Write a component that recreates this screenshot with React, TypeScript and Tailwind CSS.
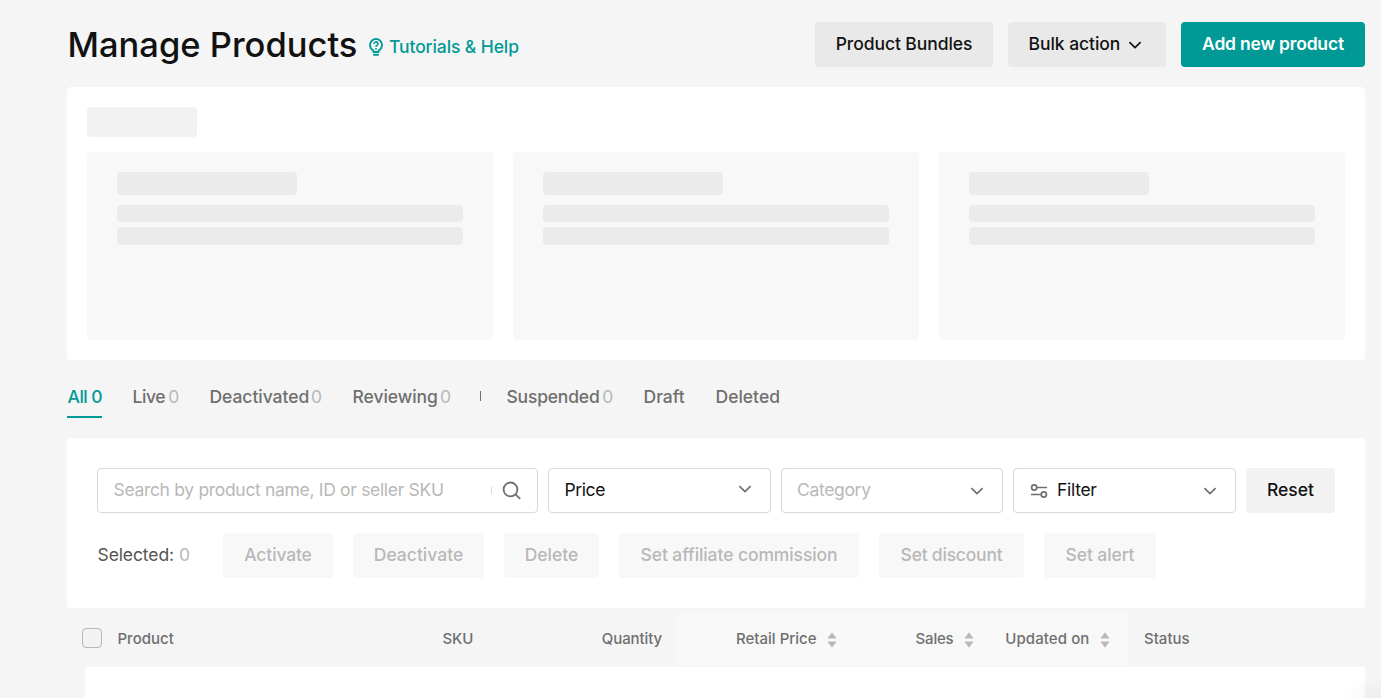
import { clsx } from "clsx";

const Chevron = ({ className }: { className?: string }) => (
  <svg className={clsx("h-[8px] w-[14px] shrink-0", className)} viewBox="0 0 14 8" fill="none" stroke="currentColor" strokeWidth="1.7">
    <path d="M1.4 1.2 7 6.6l5.6-5.4" strokeLinejoin="round" />
  </svg>
);

const Sorter = () => (
  <svg className="h-[16px] w-[10px] shrink-0" viewBox="0 0 10 16" fill="#b8b8b8">
    <path d="M5 0.5 9.7 6.5H0.3zM5 15.5 0.3 9.5h9.4z" />
  </svg>
);

const HelpBulb = () => (
  <svg className="mb-[1px] h-[18px] w-[14px] shrink-0" viewBox="0 0 14 18" fill="none" stroke="currentColor" strokeWidth="1.8">
    <path d="M4.4 14V12.6C2.4 11.5 1 9.6 1 7a6 6 0 0 1 12 0c0 2.6-1.4 4.5-3.4 5.600V14z" strokeLinejoin="round" />
    <path d="M4.200 16.800h5.600" strokeWidth="2" />
    <path d="M5 5.900a2 1.850 0 1 1 2.900 1.500C7.300 7.750 7 8.100 7 8.900" strokeWidth="1.600" />
    <path d="M7 9.900v1.500" strokeWidth="1.700" />
  </svg>
);

const SearchIcon = () => (
  <svg className="h-[20px] w-[20px] shrink-0" viewBox="0 0 20 20" fill="none" stroke="#6f6f6f" strokeWidth="1.8">
    <circle cx="8.500" cy="8.400" r="6.900" />
    <path d="m13.300 13.200 4.900 4.700" />
  </svg>
);

const FilterIcon = () => (
  <svg className="ml-[1px] h-[14px] w-[18px] shrink-0" viewBox="0 0 18 14" fill="none" stroke="#6f6f6f" strokeWidth="1.700">
    <circle cx="4.200" cy="3.500" r="2.600" />
    <path d="M6.800 3.500H17M1 10.500h10.200" />
    <circle cx="13.800" cy="10.500" r="2.600" />
  </svg>
);

const Skeleton = () => (
  <div className="h-[188px] flex-1 rounded bg-[#f8f8f8] px-[30px] pt-5">
    <div className="h-[23px] w-[180px] rounded bg-[#ebebeb]" />
    <div className="mt-[10px] h-[17px] rounded bg-[#ebebeb]" />
    <div className="mt-[5px] h-[18px] rounded bg-[#ebebeb]" />
  </div>
);

const tabs = [
  { label: "All", count: "0", box: "w-[35px] text-[#009995] tracking-[-0.5px]", active: true },
  { label: "Live", count: "0", box: "w-[47px] ml-[30px] tracking-[-0.4px]" },
  { label: "Deactivated", count: "0", box: "w-[113px] ml-[30px] tracking-[-0.05px]" },
  { label: "Reviewing", count: "0", box: "w-[99px] ml-[30px] tracking-[-0.05px]" },
  { label: "Suspended", count: "0", box: "w-[107px] ml-[25px] tracking-[-0.2px]" },
  { label: "Draft", box: "w-[42px] ml-[30px]" },
  { label: "Deleted", box: "w-[66px] ml-[30px]" },
];

const actions = [
  { label: "Activate", box: "w-[110px] tracking-[-0.15px]" },
  { label: "Deactivate", box: "w-[131px]" },
  { label: "Delete", box: "w-[95px]" },
  { label: "Set affiliate commission", box: "w-[240px] tracking-[-0.09px]" },
  { label: "Set discount", box: "w-[145px] tracking-[-0.22px]" },
  { label: "Set alert", box: "w-[112px] tracking-[-0.1px]" },
];

const field = "flex h-[45px] items-center rounded border border-[#d9d9d9] bg-white pl-[15px]";

export default function App() {
  return (
    <div className="relative h-[698px] overflow-hidden bg-[#f5f5f5] pl-[67px] pr-4 font-['Inter',sans-serif] text-[17.5px] font-medium whitespace-nowrap text-[#121212]">
      <header className="flex h-[87px] items-start pt-[22px]">
        <h1 className="h-[45px] w-[302px] pl-[0.5px] text-[34.5px] leading-[45px]">Manage Products</h1>
        <a className="flex h-[50px] items-center gap-[6px] text-[#009995]">
          <HelpBulb />
          <span className="tracking-[-0.1px]">Tutorials &amp; Help</span>
        </a>
        <div className="ml-auto flex gap-[15px]">
          <button className="h-[45px] w-[178px] rounded bg-[#e9e9e9] pb-px tracking-[-0.08px]">Product Bundles</button>
          <button className="flex h-[45px] w-[158px] items-center gap-[8px] rounded bg-[#e9e9e9] pb-px pl-[20.500px] tracking-[-0.05px]">
            Bulk action
            <Chevron className="mt-[2px]" />
          </button>
          <button className="h-[45px] w-[184px] rounded bg-[#009995] pb-px font-semibold tracking-[-0.2px] text-white">Add new product</button>
        </div>
      </header>

      <section className="h-[273px] rounded bg-white p-5">
        <div className="h-[30px] w-[110px] rounded bg-[#f2f2f2]" />
        <div className="mt-[15px] flex gap-5">
          <Skeleton />
          <Skeleton />
          <Skeleton />
        </div>
      </section>

      <nav className="flex h-[78px] pt-[16px] text-[#6f6f6f]">
        {tabs.map((t) => (
          <div key={t.label} className="flex">
            {t.label === "Suspended" && <span className="mt-[15px] ml-[29px] h-[10px] w-px bg-[#6f6f6f]" />}
            <div className={clsx("flex h-[42px] justify-between border-b-2 leading-[41px]", t.box, t.active ? "border-[#009995]" : "border-transparent")}>
              <span className="pl-[0.5px]">{t.label}</span>
              {t.count && <span className={clsx(!t.active && "font-normal text-[#b8b8b8]")}>{t.count}</span>}
            </div>
          </div>
        ))}
      </nav>

      <section className="h-[170px] rounded bg-white px-[30px] pt-[30px]">
        <div className="flex gap-[10px] font-normal">
          <div className={clsx(field, "w-[441px]")}>
            <span className="pb-px pl-[0.5px] tracking-[-0.32px] text-[#b8b8b8]">Search by product name, ID or seller SKU</span>
            <span className="mr-[10px] ml-auto h-[7px] w-px bg-[#d9d9d9]" />
            <span className="mr-[15px]"><SearchIcon /></span>
          </div>
          <div className={clsx(field, "w-[223px] justify-between pr-[18px]")}>
            <span className="pb-px pl-[0.5px] tracking-[-0.4px]">Price</span>
            <Chevron className="mb-[3px] text-[#6f6f6f]" />
          </div>
          <div className={clsx(field, "w-[222px] justify-between pr-[18px]")}>
            <span className="tracking-[-0.33px] text-[#b8b8b8]">Category</span>
            <Chevron className="text-[#6f6f6f]" />
          </div>
          <div className={clsx(field, "w-[223px] pr-[18px]")}>
            <FilterIcon />
            <span className="ml-[9px] pb-px tracking-[-0.3px]">Filter</span>
            <Chevron className="ml-auto text-[#6f6f6f]" />
          </div>
          <button className="h-[45px] w-[89px] rounded bg-[#f2f2f2] pb-px font-medium">Reset</button>
        </div>
        <div className="mt-5 flex gap-5">
          <div className="flex w-[106px] gap-[5px] pl-[0.5px] leading-[43px] font-normal tracking-[-0.1px] text-[#555]">
            <span>Selected:</span>
            <span className="text-[#b8b8b8]">0</span>
          </div>
          {actions.map((a) => (
            <button key={a.label} className={clsx("h-[45px] rounded bg-[#f8f8f8] pb-px text-[#b8b8b8]", a.box)}>{a.label}</button>
          ))}
        </div>
      </section>

      <section>
        <div className="flex h-[59px] pt-[5px] text-[15px] leading-[51px] text-[#6f6f6f]">
          <div className="flex w-[375.500px] pl-[15px]">
            <span className="mt-[15px] mr-[15.500px] size-5 rounded border border-[#b8b8b8] bg-[#f2f2f2]" />
            <span>Product</span>
          </div>
          <div className="w-[91.500px] tracking-[-0.1px]">SKU</div>
          <div className="w-[143px] pr-[15px] text-right tracking-[-0.1px]">Quantity</div>
          <div className="flex h-[53px] w-[452px] bg-[#f8f8f8]">
            <div className="flex w-[159.500px] items-center justify-end gap-[10px]"><span className="pb-[2px]">Retail Price</span><Sorter /></div>
            <div className="flex w-[137px] items-center justify-end gap-[10px]"><span className="pb-[2px] tracking-[-0.2px]">Sales</span><Sorter /></div>
            <div className="flex w-[136px] items-center justify-end gap-[10px]"><span className="pb-[2px] tracking-[0.1px]">Updated on</span><Sorter /></div>
          </div>
          <div className="pl-[15px]">Status</div>
        </div>
        <div className="ml-[18px] h-[31px] rounded-tl bg-white" />
      </section>
      <div className="pointer-events-none absolute right-0 bottom-0 h-[22px] w-[44px] bg-[radial-gradient(ellipse_at_bottom_right,rgba(0,0,0,0.03),transparent_70%)]" />
    </div>
  );
}
